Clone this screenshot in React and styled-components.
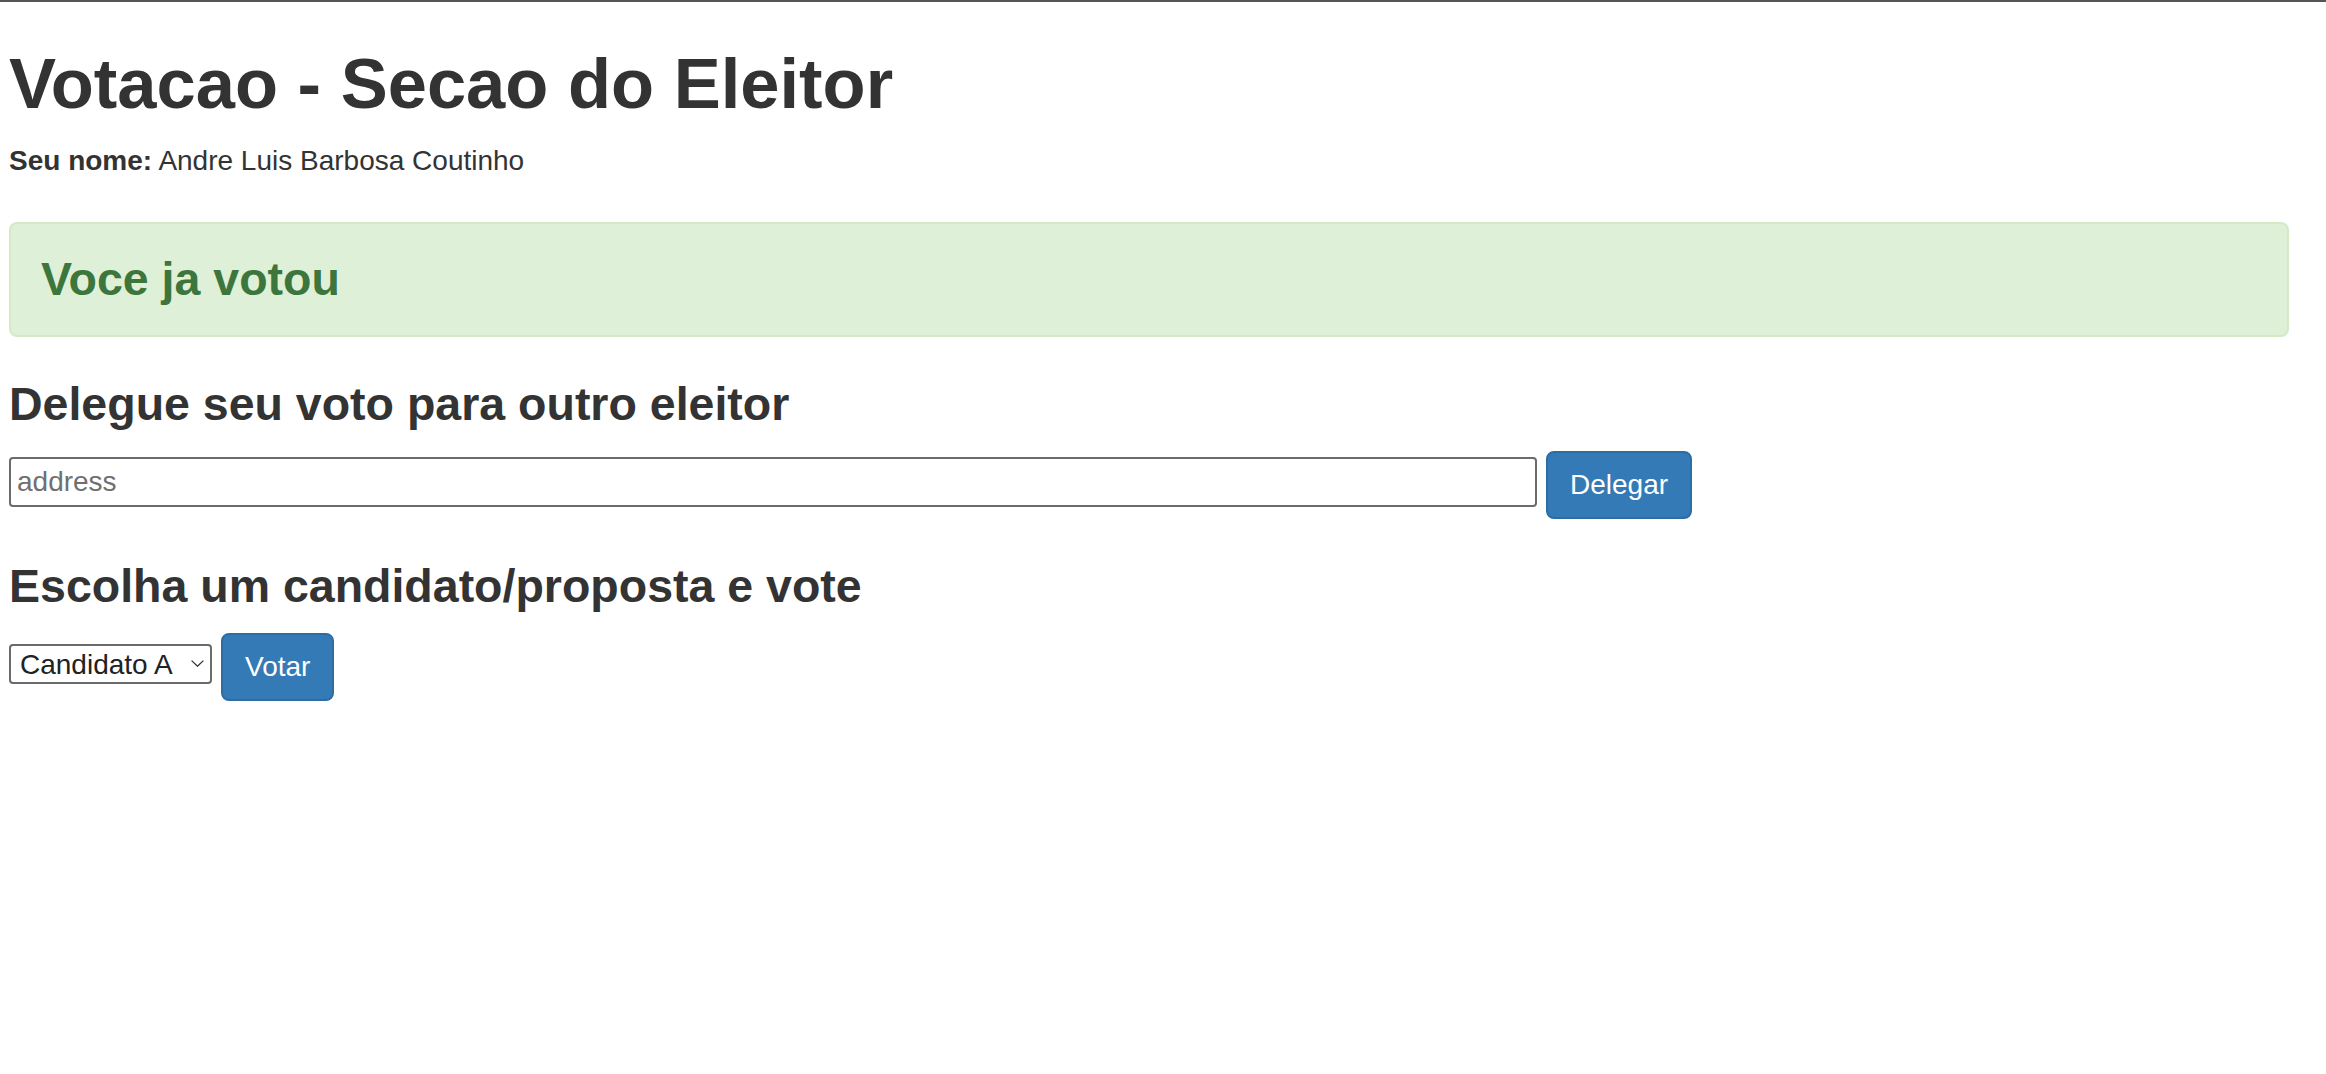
import React from "react";
import styled, { createGlobalStyle } from "styled-components";

const colors = {
  text: "#333333",
  border: "#6b6b6b",
  primary: "#337ab7",
  primaryBorder: "#2e6da4",
  successBg: "#dff0d8",
  successBorder: "#d6e9c6",
  successText: "#3c763d",
};

const GlobalStyle = createGlobalStyle`
  html, body {
    margin: 0;
    background: #fff;
  }

  body {
    border-top: 2px solid #555;
    font-family: "Liberation Sans", Arial, Helvetica, sans-serif;
    font-size: 28px;
    line-height: 40px;
    color: ${colors.text};
  }
`;

export default function App() {
  return (
    <>
      <GlobalStyle />
      <Page>
        <Title>Votacao - Secao do Eleitor</Title>
        <Voter>
          <strong>Seu nome:</strong> Andre Luis Barbosa Coutinho
        </Voter>

        <Alert>
          <AlertTitle>Voce ja votou</AlertTitle>
        </Alert>

        <SectionTitle>Delegue seu voto para outro eleitor</SectionTitle>
        <FormRow>
          <AddressInput type="text" placeholder="address" />
          <Button type="button">Delegar</Button>
        </FormRow>

        <SectionTitle>Escolha um candidato/proposta e vote</SectionTitle>
        <FormRow>
          <SelectWrap>
            <Select defaultValue="A">
              <option value="A">Candidato A</option>
              <option value="B">Candidato B</option>
              <option value="C">Candidato C</option>
            </Select>
            <Chevron width="13" height="7" viewBox="0 0 13 7">
              <path d="M0.6 0.6 L6.5 6.2 L12.4 0.6" fill="none" stroke="#333" strokeWidth="1.3" />
            </Chevron>
          </SelectWrap>
          <Button type="button">Votar</Button>
        </FormRow>
      </Page>
    </>
  );
}

const Page = styled.div`
  padding: 0 37px 0 9px;
`;

const Title = styled.h1`
  margin: 40px 0 16px;
  font-size: 70.5px;
  font-weight: bold;
  line-height: 83px;
`;

const Voter = styled.p`
  margin: 0 0 41px;

  strong {
    font-weight: bold;
  }
`;

const Alert = styled.div`
  padding: 30px;
  margin-bottom: 40px;
  background: ${colors.successBg};
  border: 2px solid ${colors.successBorder};
  border-radius: 8px;
`;

const AlertTitle = styled.h3`
  margin: 0;
  font-size: 46.5px;
  font-weight: bold;
  line-height: 51px;
  color: ${colors.successText};
`;

const SectionTitle = styled.h3`
  margin: 40px 0 20px;
  font-size: 46.5px;
  font-weight: bold;
  line-height: 54px;
`;

const FormRow = styled.form`
  display: flex;
  align-items: flex-start;
  gap: 9px;
  margin: 0 0 20px;
`;

const AddressInput = styled.input`
  box-sizing: border-box;
  width: 1528px;
  height: 50px;
  margin-top: 6px;
  padding: 0 6px;
  border: 2px solid ${colors.border};
  border-radius: 4px;
  font-family: inherit;
  font-size: 28px;
  color: #222;
  background: #fff;
  outline: none;

  &::placeholder {
    color: #707070;
  }
`;

const Button = styled.button`
  box-sizing: border-box;
  height: 68px;
  padding: 0 22px;
  border: 2px solid ${colors.primaryBorder};
  border-radius: 8px;
  background: ${colors.primary};
  color: #fff;
  font-family: inherit;
  font-size: 28px;
  line-height: 40px;
  cursor: pointer;
`;

const SelectWrap = styled.div`
  position: relative;
  margin-top: 11px;
`;

const Select = styled.select`
  box-sizing: border-box;
  height: 40px;
  padding: 0 34px 0 9px;
  border: 2px solid ${colors.border};
  border-radius: 4px;
  background: #fff;
  color: #222;
  font-family: inherit;
  font-size: 28px;
  appearance: none;
  -webkit-appearance: none;
  outline: none;
`;

const Chevron = styled.svg`
  position: absolute;
  right: 8px;
  top: 16px;
  pointer-events: none;
`;
